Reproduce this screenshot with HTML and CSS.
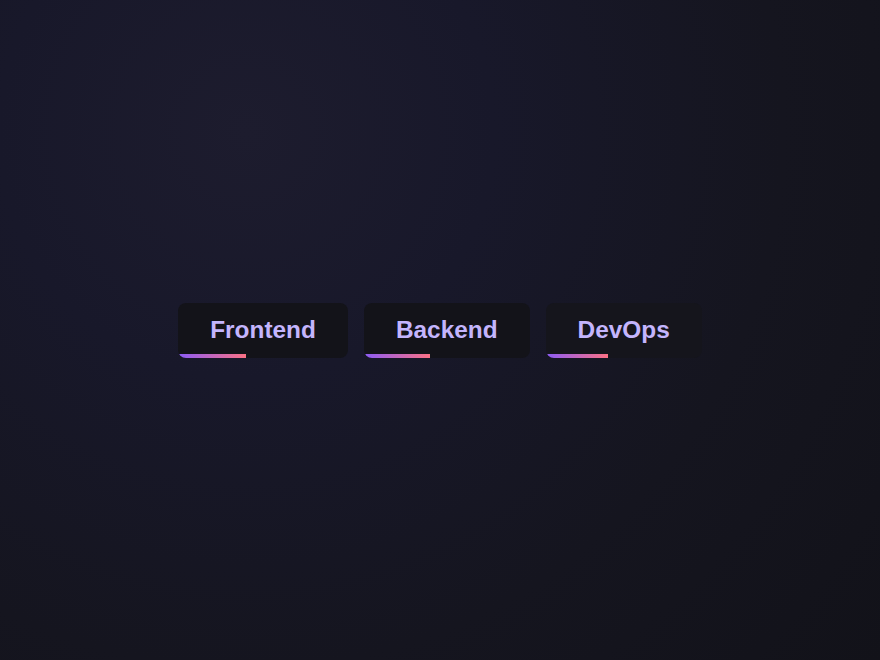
FILE: index.html
```html
<!DOCTYPE html>
<html lang="en">
<head>
<meta charset="utf-8">
<title>Tabs</title>
<link rel="stylesheet" href="styles.css">
</head>
<body>
<main class="stage">
  <nav class="tabs">
    <button class="tab"><span class="label">Frontend</span><span class="bar"></span></button>
    <button class="tab"><span class="label">Backend</span><span class="bar"></span></button>
    <button class="tab tab-dim"><span class="label">DevOps</span><span class="bar"></span></button>
  </nav>
</main>
</body>
</html>
```

FILE: styles.css
```css
html, body {
  margin: 0;
  height: 100%;
}
body {
  background: radial-gradient(circle at 28% 20%, #1d1c2e 0%, #18182a 30%, #15151f 65%, #121219 100%);
  font-family: "Liberation Sans", Arial, sans-serif;
}
.stage {
  height: 100%;
  display: flex;
  align-items: center;
  justify-content: center;
}
.tabs {
  display: flex;
  gap: 16px;
}
.tab {
  position: relative;
  overflow: hidden;
  border: none;
  border-radius: 8px;
  background: #131319;
  padding: 13px 32px 15px;
  font-family: inherit;
  font-size: 24.4px;
  font-weight: 700;
  line-height: 27px;
  color: #c4b5fd;
  cursor: pointer;
  display: flex;
}
.tab-dim {
  background: #15151c;
}
.bar {
  position: absolute;
  left: 0;
  bottom: 0;
  width: 40%;
  height: 4px;
  background: linear-gradient(90deg, #8b5cf6, #fb7185);
}
```
